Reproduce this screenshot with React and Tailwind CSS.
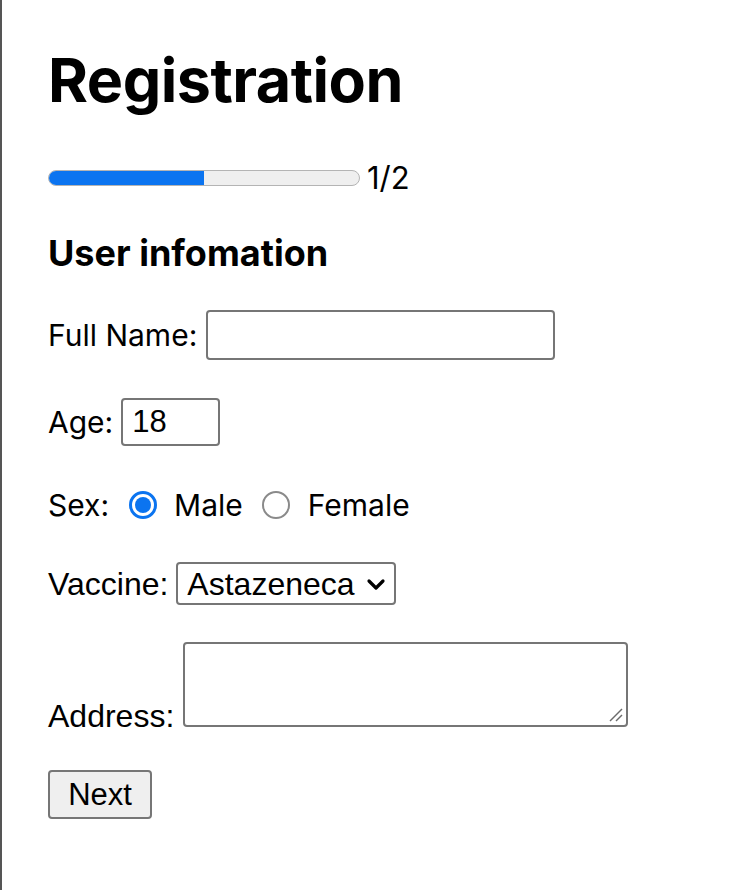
export default function App() {
  const sans = "font-['Inter','Noto_Sans',sans-serif]";
  const arial = "font-['Liberation_Sans',Arial,sans-serif]";
  return (
    <div className={`min-h-screen w-full bg-white border-l-2 border-[#555555] pl-[46px] pt-[48px] text-black ${sans}`}>
      <h1 className="text-[61px] leading-[64px] font-bold tracking-[-0.5px]">Registration</h1>

      <div className="mt-[50px] flex h-[32px] items-center">
        <div className="h-[16px] w-[312px] overflow-hidden rounded-full border border-[#b4b4b4] bg-[#efefef]">
          <div className="h-full w-1/2 bg-[#0b74f0]"></div>
        </div>
        <span className="ml-[7px] text-[31px] leading-[32px]">1/2</span>
      </div>

      <h3 className="mt-[39px] text-[36px] leading-[40px] font-bold">User infomation</h3>

      <div className="mt-[37px] flex h-[50px] items-center gap-[9px]">
        <label className="text-[30px] leading-[36px]">Full Name:</label>
        <input
          type="text"
          className={`h-[50px] w-[349px] rounded-[4px] border-2 border-[#767676] bg-white px-2 text-[30px] outline-none ${arial}`}
        />
      </div>

      <div className="mt-[38px] flex h-[48px] items-center gap-[8px]">
        <label className="text-[30px] leading-[36px]">Age:</label>
        <input
          type="text"
          defaultValue="18"
          className={`h-[48px] w-[99px] rounded-[4px] border-2 border-[#767676] bg-white px-[9px] text-[31px] outline-none ${arial}`}
        />
      </div>

      <div className="mt-[45px] flex h-[28px] items-center">
        <span className="text-[30px] leading-[36px]">Sex:</span>
        <span className="ml-[20px] flex h-[28px] w-[28px] items-center justify-center rounded-full border-[3px] border-[#0b74f0] bg-white">
          <span className="h-[16px] w-[16px] rounded-full bg-[#0b74f0]"></span>
        </span>
        <span className="ml-[17px] text-[30px] leading-[36px]">Male</span>
        <span className="ml-[19px] h-[28px] w-[28px] rounded-full border-2 border-[#8a8a8a] bg-white"></span>
        <span className="ml-[18px] text-[30px] leading-[36px]">Female</span>
      </div>

      <div className="mt-[43px] flex h-[43px] items-center gap-[8px]">
        <span className={`text-[32px] leading-[36px] ${arial}`}>Vaccine:</span>
        <div className={`flex h-[43px] w-[220px] items-center rounded-[4px] border-2 border-[#767676] bg-white pl-[9px] ${arial}`}>
          <span className="text-[32px] leading-[36px]">Astazeneca</span>
          <svg className="ml-[11px]" width="20" height="14" viewBox="0 0 20 14" fill="none">
            <path d="M3 4 L10 11 L17 4" stroke="black" strokeWidth="3.2" strokeLinecap="round" strokeLinejoin="round" />
          </svg>
        </div>
      </div>

      <div className="mt-[37px] flex items-end gap-[9px]">
        <span className={`text-[32px] leading-[22px] ${arial}`}>Address:</span>
        <div className="relative">
          <textarea className="block h-[85px] w-[445px] resize-none rounded-[4px] border-2 border-[#767676] bg-white outline-none"></textarea>
          <svg className="absolute bottom-[4px] right-[4px]" width="16" height="16" viewBox="0 0 16 16" fill="none">
            <path d="M2 14 L14 2" stroke="#6b6b6b" strokeWidth="1.4" />
            <path d="M8 14 L14 8" stroke="#6b6b6b" strokeWidth="1.4" />
          </svg>
        </div>
      </div>

      <button
        className={`mt-[43px] flex h-[49px] w-[104px] items-center justify-center rounded-[4px] border-2 border-[#767676] bg-[#efefef] text-[31px] leading-[36px] ${arial}`}
      >
        Next
      </button>
    </div>
  );
}
